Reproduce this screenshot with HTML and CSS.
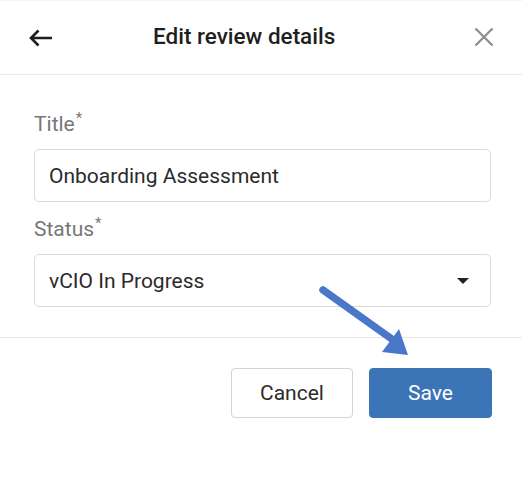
FILE: index.html
```html
<!DOCTYPE html>
<html>
<head>
<meta charset="utf-8">
<link rel="stylesheet" href="styles.css">
</head>
<body>
<div class="dialog">
  <header class="header">
    <svg class="back" width="26" height="20" viewBox="0 0 26 20">
      <path d="M24 10 H3 M10.5 2.5 L3 10 L10.5 17.5" fill="none" stroke="#1e1e1e" stroke-width="2.6" stroke-linecap="butt" stroke-linejoin="miter"/>
    </svg>
    <h1 class="title">Edit review details</h1>
    <svg class="close" width="20" height="20" viewBox="0 0 20 20">
      <path d="M1.5 1.5 L18.5 18.5 M18.5 1.5 L1.5 18.5" fill="none" stroke="#8c8c8c" stroke-width="2.2"/>
    </svg>
  </header>
  <div class="body">
    <label class="label">Title<sup>*</sup></label>
    <div class="field">Onboarding Assessment</div>
    <label class="label status-label">Status<sup>*</sup></label>
    <div class="field select">
      <span>vCIO In Progress</span>
      <span class="caret"></span>
    </div>
  </div>
  <footer class="footer">
    <button class="btn cancel">Cancel</button>
    <button class="btn save">Save</button>
  </footer>
  <svg class="annot" width="100" height="80" viewBox="0 0 100 80">
    <path d="M7 8 L80 60" stroke="#4a78c9" stroke-width="7.5" stroke-linecap="round" fill="none"/>
    <path d="M92 73 L66 70 L83 47 Z" fill="#4a78c9"/>
  </svg>
</div>
</body>
</html>
```
FILE: styles.css
```css
* { box-sizing: border-box; }
html, body { margin: 0; padding: 0; background: #fff; }
body { font-family: Roboto, "Liberation Sans", sans-serif; color: #222; }
.dialog { position: relative; width: 522px; height: 481px; border-top: 1px solid #f3f3f3; }
.header {
  height: 74px;
  display: flex;
  align-items: center;
  padding: 0 28px 0 28px;
  border-bottom: 1px solid #e8e8e8;
}
.back { display: block; margin-top: 1px; }
.title {
  margin: 0 0 0 99px;
  font-size: 22.5px;
  font-weight: 500;
  color: #1f1f1f;
  line-height: 26px;
  flex: 1;
  margin-top: -4px;
}
.close { display: block; margin-top: -1px; }
.body { padding: 37px 31px 30px 34px; border-bottom: 1px solid #e8e8e8; }
.label {
  display: block;
  font-size: 21px;
  line-height: 24px;
  color: #777;
  margin-bottom: 13px;
}
.label sup { font-size: 15px; line-height: 0; vertical-align: 8px; margin-left: 1px; }
.status-label { margin-top: 15px; }
.field {
  height: 53px;
  border: 1px solid #dadada;
  border-radius: 5px;
  padding: 0 14px;
  display: flex;
  align-items: center;
  font-size: 21px;
  color: #2b2b2b;
}
.select { justify-content: space-between; padding-right: 21px; }
.caret {
  width: 0; height: 0;
  border-left: 6px solid transparent;
  border-right: 6px solid transparent;
  border-top: 6px solid #222;
}
.footer {
  display: flex;
  justify-content: flex-end;
  gap: 16px;
  padding: 30px 30px 0 0;
}
.btn {
  height: 50px;
  font-family: Roboto, "Liberation Sans", sans-serif;
  font-size: 21px;
  border-radius: 4px;
  cursor: pointer;
}
.cancel { width: 122px; background: #fff; border: 1px solid #d4d4d4; color: #2b2b2b; }
.save { width: 123px; background: #3b74b7; border: 1px solid #3b74b7; color: #fff; font-weight: 400; }
.annot { position: absolute; left: 316px; top: 281px; }
```
